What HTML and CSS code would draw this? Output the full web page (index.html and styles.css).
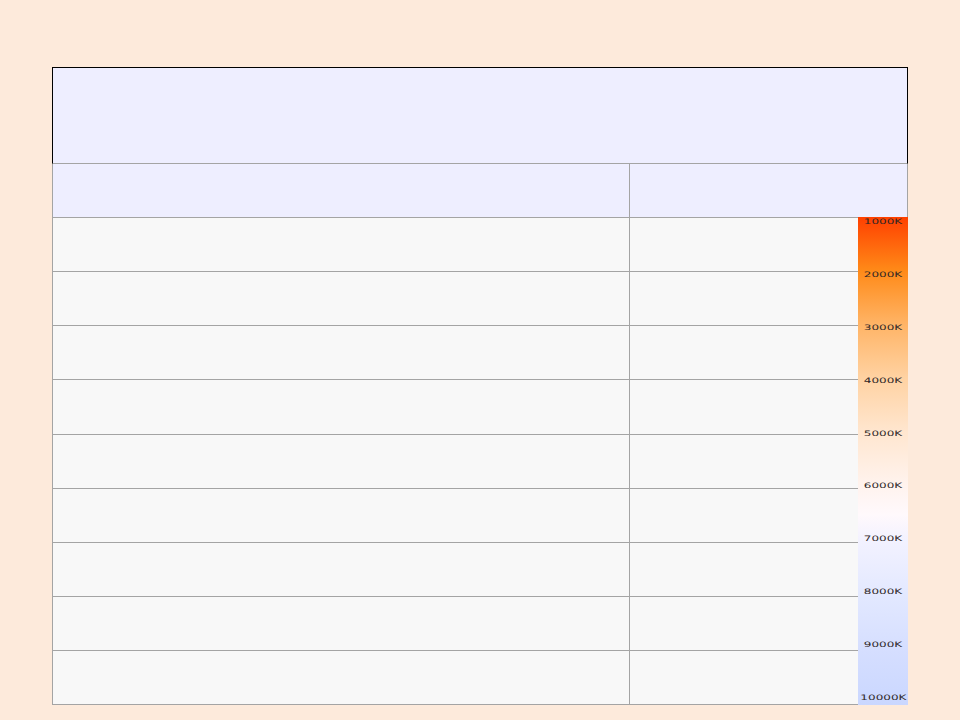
FILE: index.html
```html
<!DOCTYPE html>
<html lang="en">
<head>
    <meta charset="UTF-8">
    <meta name="viewport" content="width=device-width, initial-scale=1.0">
    <title>Color Temperature</title>
    <link rel="stylesheet" href="styles.css">
</head>
<body>
    <div class="panel">
        <div class="title-box"></div>
        <div class="grid">
            <div class="cell head"></div><div class="cell head"></div>
            <div class="cell"></div><div class="cell"></div>
            <div class="cell"></div><div class="cell"></div>
            <div class="cell"></div><div class="cell"></div>
            <div class="cell tall"></div><div class="cell tall"></div>
            <div class="cell"></div><div class="cell"></div>
            <div class="cell"></div><div class="cell"></div>
            <div class="cell"></div><div class="cell"></div>
            <div class="cell"></div><div class="cell"></div>
            <div class="cell"></div><div class="cell"></div>
        </div>

        <!-- kelvin scale legend -->
        <div class="scale">
            <span>1000K</span>
            <span>2000K</span>
            <span>3000K</span>
            <span>4000K</span>
            <span>5000K</span>
            <span>6000K</span>
            <span>7000K</span>
            <span>8000K</span>
            <span>9000K</span>
            <span>10000K</span>
        </div>
    </div>
</body>
</html>
```

FILE: styles.css
```css
html, body {
    margin: 0;
    padding: 0;
}
body {
    background: #fdeadb;
    font-family: "DejaVu Sans", Verdana, sans-serif;
}
.panel {
    position: relative;
    width: 856px;
    margin: 67px 0 0 52px;
}
.title-box {
    height: 95px;
    background: #eeeeff;
    border: 1px solid #000;
    border-bottom-color: #a4a4a4;
}
.grid {
    display: grid;
    grid-template-columns: 577px 1fr;
    border-left: 1px solid #a4a4a4;
    border-right: 1px solid #a4a4a4;
}
.cell {
    height: 53px;
    background: #f8f8f8;
    border-bottom: 1px solid #a4a4a4;
}
.cell.tall {
    height: 54px;
}
.cell:nth-child(odd) {
    border-right: 1px solid #a4a4a4;
}
.cell.head {
    background: #eeeeff;
}
.scale {
    position: absolute;
    right: 0;
    top: 150px;
    bottom: 0;
    width: 50px;
    display: flex;
    flex-direction: column;
    justify-content: space-between;
    align-items: center;
    padding: 1px 0 3px;
    box-sizing: border-box;
    background: linear-gradient(to bottom,
        #ff4000 0%,
        #ff8a18 11%,
        #ffb466 22%,
        #ffd2a2 33%,
        #ffe6cf 44%,
        #fff3ee 55%,
        #fff9fc 61%,
        #f3f2ff 66%,
        #e2e8ff 78%,
        #d5deff 89%,
        #cad7ff 100%);
}
.scale span {
    font-size: 7.5px;
    line-height: 8px;
    color: #2e2626;
    transform: scaleX(1.6);
}
```
